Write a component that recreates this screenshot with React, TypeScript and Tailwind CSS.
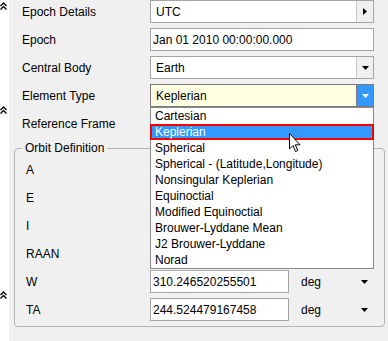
import React from "react";

// little "collapse" marks in the left gutter
function Chevrons() {
  return (
    <svg width="7" height="8" viewBox="0 0 7 8" className="block">
      <polyline points="0.5,4 3.5,1 6.5,4" fill="none" stroke="#000" strokeWidth="1.3" />
      <polyline points="0.5,7.5 3.5,4.5 6.5,7.5" fill="none" stroke="#000" strokeWidth="1.3" />
    </svg>
  );
}

function TriDown({ color = "#000" }: { color?: string }) {
  return (
    <svg width="7" height="4" viewBox="0 0 7 4" className="block">
      <path d="M0 0 H7 L3.5 4 Z" fill={color} />
    </svg>
  );
}

function TriRight() {
  return (
    <svg width="4" height="7" viewBox="0 0 4 7" className="block">
      <path d="M0 0 V7 L4 3.5 Z" fill="#000" />
    </svg>
  );
}

function Combo({
  value,
  arrow,
  active = false,
}: {
  value: string;
  arrow: "down" | "right";
  active?: boolean;
}) {
  return (
    <div
      className={`flex h-[23px] w-[224px] border ${
        active ? "border-[#7a7a7a] bg-[#ffffe1]" : "border-[#a5a5a5] bg-white"
      }`}
    >
      <div className="flex flex-1 items-center px-[5px]">{value}</div>
      <div
        className={`flex w-[17px] items-center justify-center border-l ${
          active ? "border-[#7a7a7a] bg-[#3399ff]" : "border-[#c8c8c8] bg-[#f0f0f0]"
        }`}
      >
        {arrow === "right" ? <TriRight /> : <TriDown color={active ? "#fff" : "#000"} />}
      </div>
    </div>
  );
}

function TopRow({ label, children }: { label: string; children: React.ReactNode }) {
  return (
    <div className="flex h-[23px] items-center pl-[13px]">
      <span className="w-[128px]">{label}</span>
      {children}
    </div>
  );
}

// rows A..RAAN sit under the open list, so their values are not visible
const elements = [
  { label: "A", value: "", unit: "" },
  { label: "E", value: "", unit: "" },
  { label: "I", value: "", unit: "" },
  { label: "RAAN", value: "", unit: "" },
  { label: "W", value: "310.246520255501", unit: "deg" },
  { label: "TA", value: "244.524479167458", unit: "deg" },
];

const types = [
  "Cartesian",
  "Keplerian",
  "Spherical",
  "Spherical - (Latitude,Longitude)",
  "Nonsingular Keplerian",
  "Equinoctial",
  "Modified Equinoctial",
  "Brouwer-Lyddane Mean",
  "J2 Brouwer-Lyddane",
  "Norad",
];

export default function App() {
  return (
    <div className="relative flex h-[341px] w-[388px] overflow-hidden bg-white font-['Liberation_Sans',Arial,sans-serif] text-[12px] leading-[14px] text-black">
      {/* gutter */}
      <div className="flex w-[9px] shrink-0 flex-col">
        <div className="mt-[2px]">
          <Chevrons />
        </div>
        <div className="mt-[96px]">
          <Chevrons />
        </div>
        <div className="mt-[177px]">
          <Chevrons />
        </div>
      </div>

      {/* property panel */}
      <div className="flex min-w-0 flex-1 flex-col gap-[5px] bg-[#f0f0f0]">
        <TopRow label="Epoch Details">
          <Combo value="UTC" arrow="right" />
        </TopRow>
        <TopRow label="Epoch">
          <div className="flex h-[23px] w-[224px] items-center border border-[#a5a5a5] bg-white px-[2px]">
            Jan 01 2010 00:00:00.000
          </div>
        </TopRow>
        <TopRow label="Central Body">
          <Combo value="Earth" arrow="down" />
        </TopRow>
        <TopRow label="Element Type">
          <Combo value="Keplerian" arrow="down" active />
        </TopRow>
        <TopRow label="Reference Frame">
          <Combo value="" arrow="down" />
        </TopRow>

        <fieldset className="ml-[5px] mt-px w-[371px] shrink-0 rounded-[4px] border border-[#b4b4b4] p-0">
          <legend className="ml-[7px] px-[3px] leading-[14px]">Orbit Definition</legend>
          <div className="flex flex-col gap-[5px] pb-[5px] pl-[11px] pt-[3px]">
            {elements.map((el) => (
              <div key={el.label} className="flex h-[23px] items-center">
                <span className="w-[124px]">{el.label}</span>
                <div className="flex h-[23px] w-[139px] items-center border border-[#a5a5a5] bg-white px-[2px]">
                  {el.value}
                </div>
                <span className="ml-[12px] w-[60px]">{el.unit}</span>
                <TriDown />
              </div>
            ))}
          </div>
        </fieldset>
      </div>

      {/* open drop-down of Element Type */}
      <div className="absolute left-[150px] top-[107px] w-[224px] border border-[#8a8a8a] bg-white">
        {types.map((t) =>
          t === "Keplerian" ? (
            <div
              key={t}
              className="-mx-px flex h-[16px] items-center border-2 border-[#ff0000] bg-[#3399ff] pl-[3px] text-white"
            >
              {t}
            </div>
          ) : (
            <div key={t} className="flex h-[16px] items-center pl-[4px]">
              {t}
            </div>
          )
        )}
      </div>

      {/* mouse pointer */}
      <svg
        width="13"
        height="20"
        viewBox="0 0 13 20"
        className="absolute left-[289px] top-[133px]"
      >
        <path
          d="M0.5 0.5 L0.5 16 L4 12.5 L6.5 18.5 L8.8 17.5 L6.3 11.8 L11 11.8 Z"
          fill="#fff"
          stroke="#000"
          strokeWidth="1"
          strokeLinejoin="miter"
        />
      </svg>
    </div>
  );
}
